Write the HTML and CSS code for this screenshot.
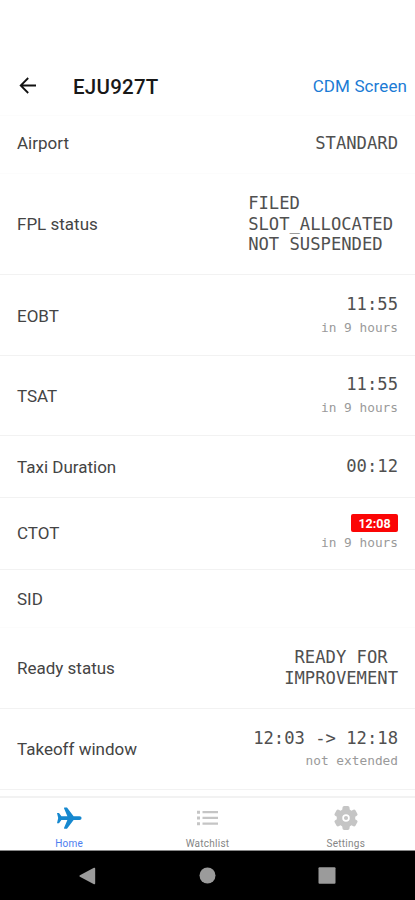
FILE: index.html
```html
<!DOCTYPE html>
<html lang="en">
<head>
<meta charset="utf-8">
<title>EJU927T</title>
<link rel="stylesheet" href="styles.css">
</head>
<body>
<div class="app">
  <header class="header">
    <svg class="back" width="18" height="18" viewBox="0 0 18 18" fill="none" stroke="#111" stroke-width="1.8"><path d="M17 8.500H2.200M9.200 1 1.700 8.500l7.500 7.500"/></svg>
    <h1 class="title">EJU927T</h1>
    <a class="link">CDM Screen</a>
  </header>
  <main class="rows">
    <div class="row airport faint"><span class="label">Airport</span><div class="value">STANDARD</div></div>
    <div class="row fpl"><span class="label">FPL status</span><div class="value block">FILED<br>SLOT_ALLOCATED<br>NOT SUSPENDED</div></div>
    <div class="row time"><span class="label">EOBT</span><div class="value">11:55<small class="note">in 9 hours</small></div></div>
    <div class="row time tsat"><span class="label">TSAT</span><div class="value">11:55<small class="note">in 9 hours</small></div></div>
    <div class="row taxi"><span class="label">Taxi Duration</span><div class="value">00:12</div></div>
    <div class="row ctot"><span class="label">CTOT</span><div class="value"><span class="badge">12:08</span><small class="note">in 9 hours</small></div></div>
    <div class="row sid faint"><span class="label">SID</span></div>
    <div class="row ready"><span class="label">Ready status</span><div class="value center">READY FOR<br>IMPROVEMENT</div></div>
    <div class="row time last"><span class="label">Takeoff window</span><div class="value">12:03 -&gt; 12:18<small class="note">not extended</small></div></div>
  </main>
  <nav class="tabs">
    <div class="tab active">
      <svg width="26" height="24" viewBox="0 0 26 24" fill="#1688cf"><path d="M1 7h2l2.400 3.200h6L8 2.200Q7.800 1.400 8.600 1.400H11l6.600 8.800H23.500q2.100 0 2.100 1.900T23.500 14H17.600L11 22.800H8.600q-.8 0-.6-.8l3.400-8h-6L3 17.200H1l1.200-5.100z"/></svg>
      <span>Home</span>
    </div>
    <div class="tab">
      <svg width="24" height="24" viewBox="0 0 24 24" fill="#c5c5c5"><path d="M2 4.800h3v3H2zM2 10.500h3v3H2zM2 16.200h3v3H2zM7.500 5H23v2.300H7.500zM7.500 10.800H23v2.300H7.500zM7.500 16.500H23v2.300H7.500z"/></svg>
      <span>Watchlist</span>
    </div>
    <div class="tab">
      <svg width="24" height="24" viewBox="0 0 24 24"><g fill="#c5c5c5"><circle cx="12" cy="12" r="9.300"/><rect x="8.400" y="0" width="7.200" height="24" rx="2"/><rect x="8.400" y="0" width="7.200" height="24" rx="2" transform="rotate(60 12 12)"/><rect x="8.400" y="0" width="7.200" height="24" rx="2" transform="rotate(120 12 12)"/></g><circle cx="12" cy="12" r="2.900" fill="#c5c5c5" stroke="#fff" stroke-width="1.700"/></svg>
      <span>Settings</span>
    </div>
  </nav>
  <footer class="system">
    <svg width="18" height="18" viewBox="0 0 18 18" fill="#9b9b9b"><path d="M1.900 8.300 16 .8q1.200-.4 1.200 1v14.400q0 1.400-1.200 1L1.900 9.700q-1.200-.7 0-1.400z"/></svg>
    <svg width="18" height="18" viewBox="0 0 18 18" fill="#9b9b9b"><circle cx="9.500" cy="8.500" r="8"/></svg>
    <svg width="18" height="18" viewBox="0 0 18 18" fill="#9b9b9b"><rect x=".5" y=".3" width="17" height="16.500" rx="1"/></svg>
  </footer>
</div>
</body>
</html>
```
FILE: styles.css
```css
* { box-sizing: border-box; }
body { margin: 0; background: #fff; font-family: Roboto, "Liberation Sans", sans-serif; color: #333; }
.app { width: 415px; height: 900px; display: flex; flex-direction: column; overflow: hidden; }
.header { height: 116px; padding: 57px 8px 0 19px; display: flex; align-items: center; border-bottom: 1px solid #fcfcfc; }
.back { flex: none; }
.title { margin: 1px auto 0 36px; font-size: 20.500px; font-weight: 500; line-height: 28px; letter-spacing: .25px; color: #181818; }
.link { color: #1b7bd5; font-size: 17px; line-height: 24px; letter-spacing: .1px; }
.row { display: flex; align-items: center; justify-content: space-between; padding: 0 17px; border-bottom: 1px solid #f2f2f2; }
.row.faint { border-color: #fcfcfc; }
.label { font-size: 17px; line-height: 22px; color: #444; }
.value { font-family: "DejaVu Sans Mono", monospace; font-size: 17.200px; line-height: 20.500px; text-align: right; color: #505050; white-space: nowrap; }
.block { text-align: left; padding-right: 5px; }
.center { text-align: center; }
.note { display: block; margin-top: 4px; font-size: 12.800px; line-height: 18px; color: #9a9a9a; }
.badge { display: block; width: 47px; height: 18px; margin-left: auto; border-radius: 2px; background: #fb0505; color: #fff; font: bold 12.500px/19px Roboto, sans-serif; text-align: center; }
.airport { height: 58px; padding-bottom: 3px; }
.fpl { height: 101px; }
.time { height: 81px; padding-top: 1px; }
.tsat { height: 80px; padding-top: 0; }
.taxi { height: 62px; }
.ctot { height: 72px; padding-bottom: 1px; }
.ctot .note { margin-top: 2px; }
.sid { height: 58px; }
.ready { height: 81px; padding-bottom: 1px; }
.time.last { padding-top: 0; }
.tabs { flex: none; height: 55px; margin-top: 6px; border-top: 2px solid #f2f2f2; border-bottom: 1px solid #888; display: flex; overflow: hidden; }
.tab { flex: 1; display: flex; flex-direction: column; align-items: center; padding-top: 8px; color: #858585; font-size: 10px; line-height: 12px; letter-spacing: .25px; }
.tab svg { flex: none; }
.tab span { margin-top: 8px; }
.tab.active { color: #4c7df0; }
.system { flex: 1; background: #000; display: flex; align-items: center; justify-content: space-between; padding: 0 79px 0 78px; }
```
